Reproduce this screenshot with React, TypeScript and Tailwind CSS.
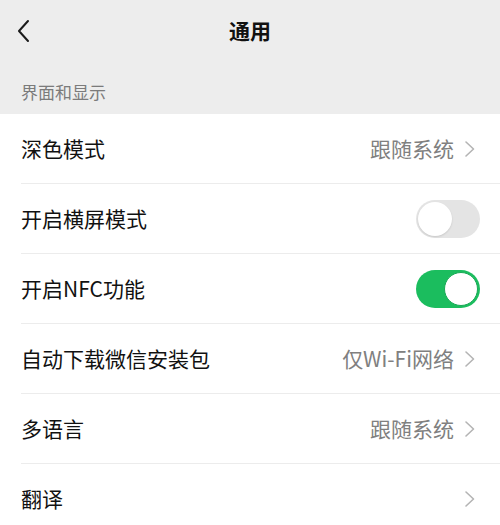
import React from "react";

type Row =
  | { label: string; kind: "link"; value?: string }
  | { label: string; kind: "toggle"; on: boolean };

const ROWS: Row[] = [
  { label: "深色模式", kind: "link", value: "跟随系统" },
  { label: "开启横屏模式", kind: "toggle", on: false },
  { label: "开启NFC功能", kind: "toggle", on: true },
  { label: "自动下载微信安装包", kind: "link", value: "仅Wi-Fi网络" },
  { label: "多语言", kind: "link", value: "跟随系统" },
  { label: "翻译", kind: "link" },
];

function Chevron() {
  return (
    <svg width="12" height="18" viewBox="0 0 12 18" className="ml-[10px] shrink-0">
      <path d="M2 2 L9.5 9 L2 16" fill="none" stroke="#b4b4b4" strokeWidth="1.6" strokeLinecap="round" strokeLinejoin="round" />
    </svg>
  );
}

function Toggle({ on }: { on: boolean }) {
  return (
    <div
      className={
        on
          ? "flex h-[38px] w-[64px] items-center justify-end rounded-full bg-[#1bbd5e] p-[2px]"
          : "flex h-[38px] w-[64px] items-center justify-start rounded-full bg-[#e4e4e4] p-[2px]"
      }
    >
      <div
        className={
          on
            ? "h-[34px] w-[34px] rounded-full border-[1.5px] border-[#18a955] bg-white"
            : "h-[34px] w-[34px] rounded-full bg-white shadow-[0_1px_2px_rgba(0,0,0,0.12)]"
        }
      />
    </div>
  );
}

export default function App() {
  return (
    <div
      className="h-[525px] w-[500px] overflow-hidden bg-[#ededed]"
      style={{ fontFamily: '"Noto Sans CJK SC", "Noto Sans", sans-serif' }}
    >
      <div className="relative flex h-[60px] items-center justify-center">
        <svg width="16" height="24" viewBox="0 0 16 24" className="absolute left-[16px] top-[19px]">
          <path d="M12 2 L3 12 L12 22" fill="none" stroke="#1a1a1a" strokeWidth="2" strokeLinecap="round" strokeLinejoin="round" />
        </svg>
        <span className="text-[21px] font-bold leading-none text-[#111]">通用</span>
      </div>
      <div className="px-[21px] pb-[12px] pt-[22px] text-[17px] leading-[20px] text-[#7b7b7b]">界面和显示</div>
      <div className="bg-white">
        {ROWS.map((row, i) => (
          <div key={row.label}>
            {i > 0 && <div className="ml-[21px] h-px bg-[#ececec]" />}
            <div className="flex h-[69px] items-center pl-[21px] pr-[20px]">
              <span className="flex-1 text-[21px] text-[#111]">{row.label}</span>
              {row.kind === "toggle" ? (
                <Toggle on={row.on} />
              ) : (
                <div className="flex items-center pr-[4px]">
                  {row.value && <span className="text-[21px] text-[#808080]">{row.value}</span>}
                  <Chevron />
                </div>
              )}
            </div>
          </div>
        ))}
      </div>
    </div>
  );
}
